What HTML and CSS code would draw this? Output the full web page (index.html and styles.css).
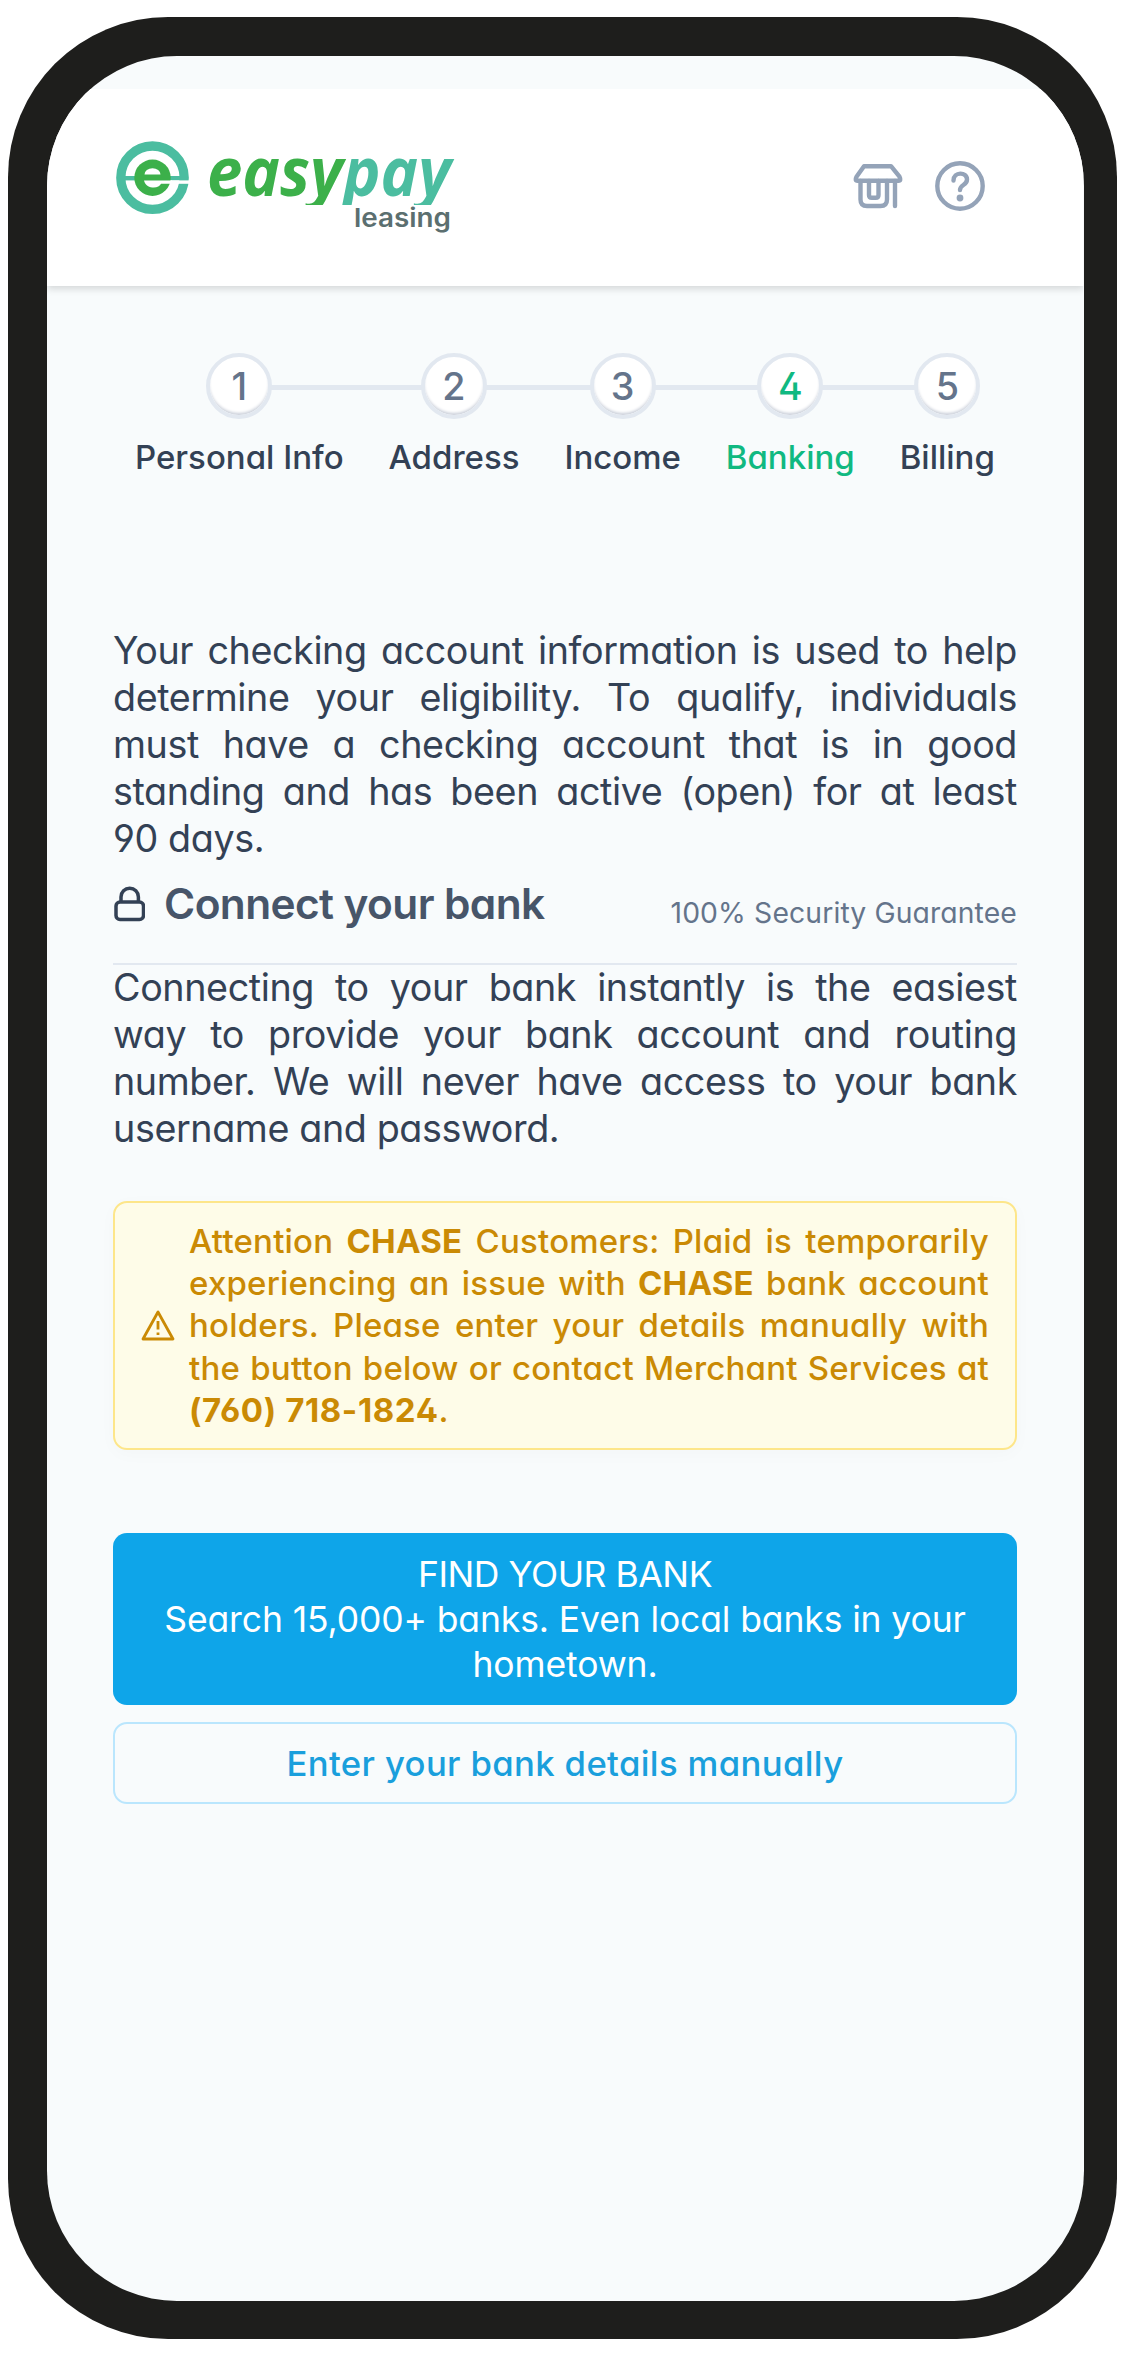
FILE: index.html
```
<!DOCTYPE html>
<html lang="en">
<head>
<meta charset="utf-8">
<title>EasyPay Leasing – Banking</title>
<link rel="stylesheet" href="styles.css">
</head>
<body>
<div class="phone">
<div class="screen">
  <header class="header">
    <svg class="logo" viewBox="0 0 350 110" role="img" aria-label="easypay leasing">
      <circle cx="39.500" cy="42.700" r="31.700" fill="none" stroke="#4bbda0" stroke-width="9.300"/>
      <rect x="10" y="41" width="60" height="4.400" fill="#4bbda0"/>
      <rect x="56" y="45.400" width="22" height="3.400" fill="#fff"/>
      <circle cx="39.500" cy="42.700" r="18.200" fill="#3cb04a"/>
      <path d="M31.500 39.500a8 6.300 0 0 1 16 0z" fill="#fff"/>
      <path d="M31 45.400h28v3.400h-11c-2 5.500-15 5.500-17-3.400z" fill="#fff"/>
      <clipPath id="tail"><rect x="80" y="0" width="270" height="70"/></clipPath>
      <g class="wordmark" clip-path="url(#tail)">
        <text x="94" y="61" textLength="136" lengthAdjust="spacingAndGlyphs" fill="#3cb04a">easy</text>
        <text x="230" y="61" textLength="108" lengthAdjust="spacingAndGlyphs" fill="#4bbda0">pay</text>
      </g>
      <text class="tagline" x="241" y="92" textLength="97" lengthAdjust="spacingAndGlyphs">leasing</text>
    </svg>
    <div class="actions">
      <svg class="icon-store" viewBox="0 0 50 50"><g fill="none" stroke="#94a3b8" stroke-width="4.400" stroke-linecap="round" stroke-linejoin="round">
        <path d="M11 5.200h27l8.500 10.500q2 4-1 4H4.500q-3 0-1-4z"/><path d="M7.500 20v18.500q0 6.500 6.500 6.500h13.500q6.500 0 6.500-6.500V20M42 20v25M16 20v14q0 2.800 2.800 2.800h3.900q2.800 0 2.800-2.800V20"/></g></svg>
      <svg class="icon-help" viewBox="0 0 50 50"><g fill="none" stroke="#94a3b8" stroke-width="4.400" stroke-linecap="round">
        <circle cx="25" cy="25" r="22.700"/><path d="M18.500 19.500c0-9 13.500-9 13.500-1 0 6-7 5-7 10.500"/></g><circle cx="25" cy="37" r="3.400" fill="#94a3b8"/></svg>
    </div>
  </header>
  <main class="content">
    <ol class="steps">
      <li class="step"><span class="dot">1</span><span class="label">Personal Info</span></li>
      <li class="step"><span class="dot">2</span><span class="label">Address</span></li>
      <li class="step"><span class="dot">3</span><span class="label">Income</span></li>
      <li class="step active"><span class="dot">4</span><span class="label">Banking</span></li>
      <li class="step"><span class="dot">5</span><span class="label">Billing</span></li>
    </ol>
    <p class="copy">Your checking account information is used to help determine your eligibility. To qualify, individuals must have a checking account that is in good standing and has been active (open) for at least <span class="nowrap">90 days.</span></p>
    <div class="section-head">
      <svg class="icon-lock" viewBox="0 0 32 36"><g fill="none" stroke="#334155" stroke-width="3.500"><rect x="3" y="16" width="27.500" height="17.500" rx="4"/><path d="M8 16v-5a8.700 8.700 0 0 1 17.400 0v5"/></g></svg>
      <h2>Connect your bank</h2>
      <span class="guarantee">100% Security Guarantee</span>
    </div>
    <p class="copy">Connecting to your bank instantly is the easiest way to provide your bank account and routing number. We will never have access to your bank username and password.</p>
    <div class="alert">
      <svg class="icon-warn" viewBox="0 0 34 32"><g fill="none" stroke="#ca8a04" stroke-width="2.800" stroke-linejoin="round"><path d="M17 2L2 29h30z"/><path d="M17 11v8.500M17 22.500v2.600"/></g></svg>
      <p>Attention <strong>CHASE</strong> Customers: Plaid is temporarily experiencing an issue with <strong>CHASE</strong> bank account holders. Please enter your details manually with the button below or contact Merchant Services at <strong class="tel">(760) 718-1824</strong>.</p>
    </div>
    <button class="btn primary"><span class="btn-title">FIND YOUR BANK</span><br>Search 15,000+ banks. Even local banks in your hometown.</button>
    <button class="btn outline">Enter your bank details manually</button>
  </main>
</div>
</div>
</body>
</html>
```
FILE: styles.css
```
* { box-sizing: border-box; }
body {
  margin: 0;
  padding: 17px 8px;
  background: #fff;
  color: #334155;
  font-family: Inter, "Liberation Sans", sans-serif;
  font-feature-settings: "cv02", "cv03", "cv04", "cv11";
}
p, h2, ol { margin: 0; padding: 0; }
.nowrap { white-space: nowrap; }
.phone {
  height: 2322px;
  padding: 38.5px 33.5px 38.5px 38.5px;
  border-radius: 160px;
  background: #1e1e1c;
}
.screen {
  height: 2245px;
  padding-top: 33.5px;
  border-radius: 130px;
  overflow: hidden;
  background: #f8fbfc;
}
.header {
  display: flex;
  justify-content: space-between;
  height: 197px;
  padding: 46px 98.5px 0 66px;
  background: #fff;
  box-shadow: 0 3px 7px rgba(0, 0, 0, .14);
  clip-path: inset(0 0 -20px 0);
}
.logo { width: 350px; height: 110px; }
.wordmark { font: italic 700 68px "Open Sans", sans-serif; }
.tagline { font-size: 26px; font-weight: 600; fill: #5b6f70; font-feature-settings: normal; }
.actions { display: flex; gap: 32.5px; padding-top: 26px; }
.icon-store, .icon-help { width: 50px; height: 50px; }
.content { padding: 67px 66.5px 0; }
.steps {
  display: flex;
  gap: 44.9px;
  padding-left: 22px;
  list-style: none;
}
.step {
  position: relative;
  display: flex;
  flex-direction: column;
  align-items: center;
  font-size: 33px;
  line-height: 47px;
  font-weight: 500;
}
.step::before {
  content: "";
  position: absolute;
  top: 32px;
  left: -45px;
  right: 0;
  height: 4.5px;
  background: #e2e8f0;
}
.step:first-child::before { left: 50%; }
.step:last-child::before { right: 50%; }
.dot {
  position: relative;
  display: grid;
  place-items: center;
  width: 66px;
  height: 66px;
  margin-bottom: 15px;
  border: 4.7px solid #e2e8f0;
  border-radius: 50%;
  background: #fff;
  box-shadow: inset 0 -3px 3px -1px #cbd0da;
  color: #64748b;
  font-size: 37.7px;
}
.active .dot, .active .label { color: #10b981; }
.copy { font-size: 37.7px; line-height: 47.1px; letter-spacing: -.4px; text-align: justify; }
.steps + .copy { margin-top: 146px; }
.section-head {
  display: flex;
  height: 102.5px;
  margin-bottom: -1px;
  border-bottom: 2px solid #e2e8f0;
}
.icon-lock { width: 32px; height: 36px; margin: 24px 19px 0 0; }
h2 { margin-top: 14px; font-size: 42.4px; line-height: 56px; font-weight: 600; letter-spacing: -.6px; color: #475569; }
.guarantee { margin: 30px 0 0 auto; font-size: 28.3px; line-height: 42px; letter-spacing: .13px; color: #64748b; }
.alert {
  display: flex;
  align-items: center;
  margin: 48.5px 0 83px;
  padding: 17px 26px;
  border: 2.3px solid #fde68a;
  border-radius: 14px;
  background: #fefce8;
  color: #ca8a04;
  box-shadow: 0 4px 18px rgba(0, 0, 0, .025);
  font-size: 33px;
  line-height: 42.3px;
  font-weight: 500;
  letter-spacing: .2px;
  text-align: justify;
}
.alert strong { font-weight: 700; }
.alert .tel { letter-spacing: .6px; }
.icon-warn { flex: none; width: 34px; height: 32px; margin-right: 14px; }
.btn {
  display: block;
  width: 100%;
  border-radius: 14px;
  font: inherit;
  font-feature-settings: inherit;
}
.primary {
  height: 172px;
  margin-bottom: 17px;
  padding: 1px 40px 0;
  border: 0;
  background: #0ea5e9;
  color: #fff;
  font-size: 35.5px;
  line-height: 45px;
  letter-spacing: -.12px;
}
.btn-title { letter-spacing: -.45px; }
.outline {
  height: 82px;
  border: 2.3px solid #bae6fd;
  background: transparent;
  color: #1a9fdc;
  font-size: 34.7px;
  font-weight: 500;
  letter-spacing: .35px;
}
```
